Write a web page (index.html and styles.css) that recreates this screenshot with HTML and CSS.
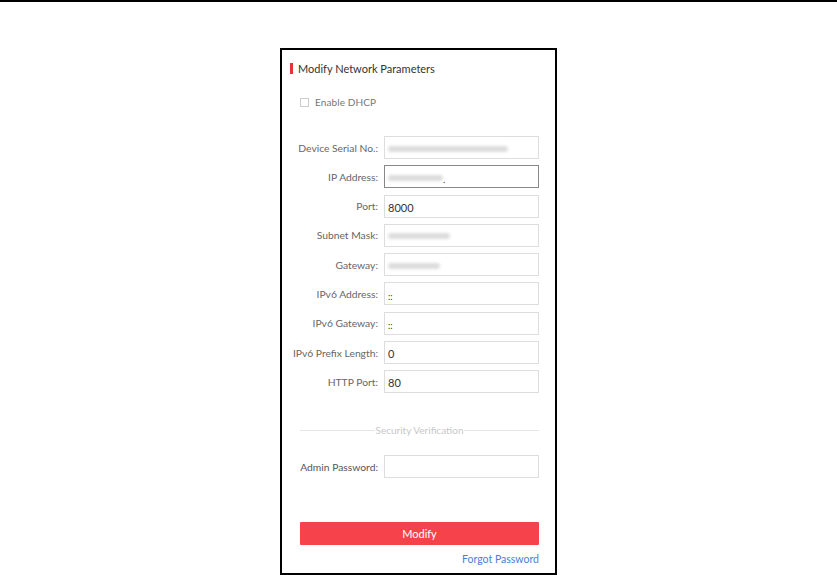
FILE: index.html
```html
<!DOCTYPE html>
<html>
<head>
<meta charset="utf-8">
<link rel="stylesheet" href="styles.css">
</head>
<body>
<div class="topline"></div>
<div class="stage">
  <div class="panel">
    <div class="title"><span class="mark"></span>Modify Network Parameters</div>
    <div class="dhcp"><span class="check"></span>Enable DHCP</div>
    <div class="form">
      <label class="lbl">Device Serial No.:</label>
      <div class="inp"><span class="blur w120"></span></div>
      <label class="lbl">IP Address:</label>
      <div class="inp focus"><span class="blur w55"></span><span class="dot">.</span></div>
      <label class="lbl">Port:</label>
      <div class="inp">8000</div>
      <label class="lbl">Subnet Mask:</label>
      <div class="inp"><span class="blur w62"></span></div>
      <label class="lbl">Gateway:</label>
      <div class="inp"><span class="blur w52"></span></div>
      <label class="lbl">IPv6 Address:</label>
      <div class="inp small">::</div>
      <label class="lbl">IPv6 Gateway:</label>
      <div class="inp small">::</div>
      <label class="lbl">IPv6 Prefix Length:</label>
      <div class="inp">0</div>
      <label class="lbl">HTTP Port:</label>
      <div class="inp">80</div>
    </div>
    <div class="divider"><span class="dline"></span><span class="dtext">Security Verification</span><span class="dline"></span></div>
    <div class="form pw">
      <label class="lbl dark">Admin Password:</label>
      <div class="inp"></div>
    </div>
    <button class="btn">Modify</button>
    <div class="forgot"><a class="link">Forgot Password</a></div>
  </div>
</div>
</body>
</html>
```
FILE: styles.css
```css
html, body {
  margin: 0;
  padding: 0;
  background: #fff;
  font-family: Lato, "Noto Sans", sans-serif;
}
.topline {
  height: 2px;
  background: #000;
}
.stage {
  display: flex;
  justify-content: center;
  padding-top: 46px;
}
.panel {
  height: 523px;
  border: 2px solid #000;
  box-sizing: content-box;
  display: flex;
  flex-direction: column;
  padding: 0 16px 0 18px;
  width: 239px;
}
.title {
  display: flex;
  align-items: center;
  margin-top: 11px;
  margin-left: -10px;
  font-size: 11px;
  color: #333;
  height: 14px;
}
.mark {
  width: 3px;
  height: 11px;
  background: #e8323b;
  margin-right: 5px;
}
.dhcp {
  display: flex;
  align-items: center;
  margin-top: 20px;
  font-size: 10px;
  color: #777;
  height: 14px;
  letter-spacing: 0.1px;
}
.check {
  width: 9px;
  height: 9px;
  border: 1px solid #ccc;
  margin-right: 6px;
  box-sizing: border-box;
}
.form {
  display: grid;
  grid-template-columns: 84px 155px;
  grid-auto-rows: 23px;
  row-gap: 6.3px;
  margin-top: 27px;
}
.lbl {
  font-size: 10.3px;
  color: #666;
  text-align: right;
  padding-right: 6px;
  display: flex;
  align-items: center;
  justify-content: flex-end;
  white-space: nowrap;
}
.lbl.dark {
  color: #555;
}
.inp {
  border: 1px solid #ddd;
  box-sizing: border-box;
  font-size: 11px;
  color: #333;
  display: flex;
  align-items: center;
  padding-left: 3px;
  padding-top: 2px;
}
.inp.focus {
  border-color: #888;
}
.inp.small {
  font-size: 9px;
  padding-top: 5px;
}
.blur {
  display: block;
  height: 6px;
  background: #dcdcdc;
  border-radius: 3px;
  filter: blur(1.5px);
}
.w120 { width: 120px; }
.w55 { width: 55px; }
.w62 { width: 62px; }
.w52 { width: 52px; }
.dot {
  font-size: 10px;
  color: #444;
  margin-top: 2px;
}
.divider {
  display: flex;
  align-items: center;
  margin-top: 30px;
  height: 14px;
}
.dline {
  flex: 1;
  height: 1px;
  background: #e6e6e6;
}
.dtext {
  font-size: 10px;
  color: #c8c8c8;
  padding: 0 1px;
}
.form.pw {
  margin-top: 18px;
}
.btn {
  margin-top: 44px;
  height: 23px;
  background: #f6434b;
  border: none;
  border-radius: 1px;
  color: #fff;
  font-family: Lato, "Noto Sans", sans-serif;
  font-size: 11px;
  padding: 0;
}
.forgot {
  display: flex;
  justify-content: flex-end;
  margin-top: 8px;
}
.link {
  font-size: 10.5px;
  color: #4a7ed8;
}
```
